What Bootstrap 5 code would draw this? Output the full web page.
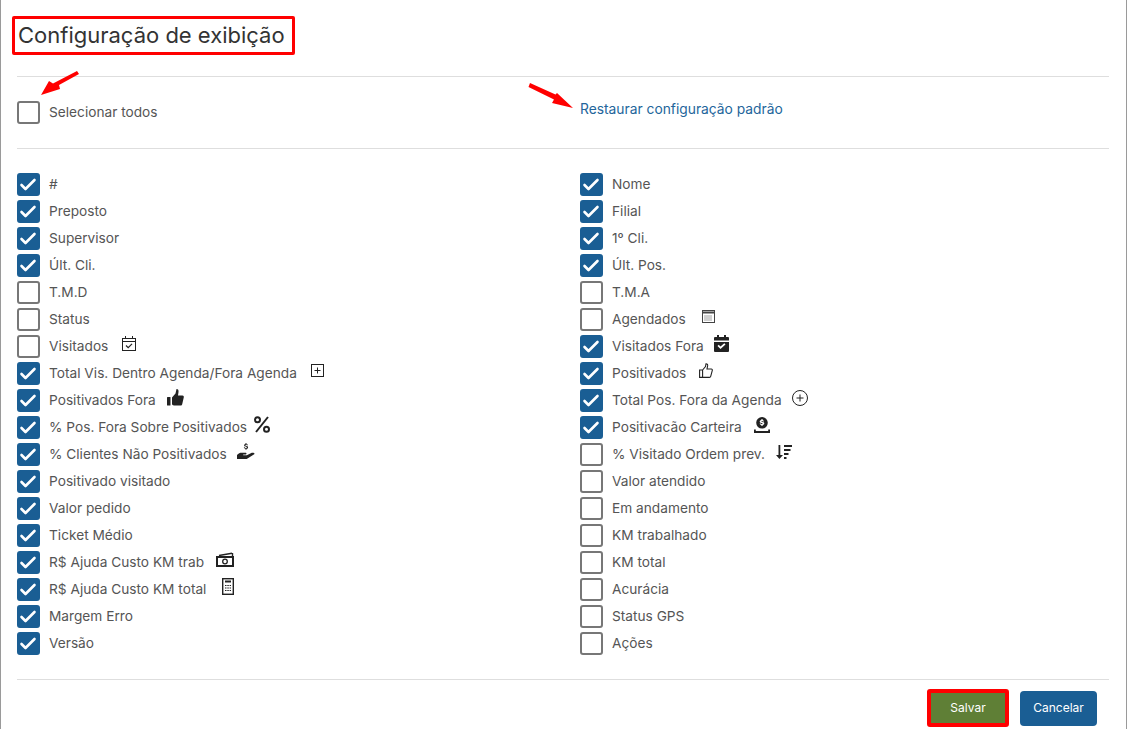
<!DOCTYPE html>
<html lang="pt-BR">
<head>
<meta charset="utf-8">
<title>Configuração de exibição</title>
<link href="https://cdn.jsdelivr.net/npm/bootstrap@5.3.0/dist/css/bootstrap.min.css" rel="stylesheet">
<style>
html,body{height:100%;overflow:hidden;background:#fff}
body{font-family:Inter,"Liberation Sans",sans-serif;font-size:13.7px;color:#555}
.dlg{position:relative;height:729px;padding:0 17px 0 16px;border-left:1px solid #9a9a9a;border-right:1px solid #9a9a9a}
.ttl-wrap{height:76px;padding-top:16px}
.ttl{display:inline-block;margin:0 0 0 -5px;padding:0 7px 0 3px;height:39px;line-height:33px;border:3px solid #f00;border-radius:2px;font-size:22px;font-weight:400;color:#333;white-space:nowrap}
.sep{border-top:1px solid #dedede;opacity:1;margin:0}
.grid{--bs-gutter-x:34px}
.selrow{height:71px;padding-top:22px}
.chk{display:flex;align-items:center;height:27px;gap:9px;margin:0}
.chk .form-check-input{width:23px;height:23px;margin:0;flex:none;border:2px solid #777;border-radius:3px;box-shadow:none}
.chk .form-check-input:checked{background-color:#1a5e94;border-color:#1a5e94;background-size:100%;background-image:url("data:image/svg+xml,%3csvg xmlns='http://www.w3.org/2000/svg' viewBox='0 0 19 19'%3e%3cpath fill='none' stroke='%23fff' stroke-linecap='round' stroke-linejoin='round' stroke-width='2.6' d='M2.500 10l4 4 9-9'/%3e%3c/svg%3e")}
.lnk{display:block;color:#23659b;text-decoration:none;line-height:20px;font-size:13.8px}
.lst{padding-top:22px;height:530px}
.ico{flex:none;margin-left:5px;margin-bottom:6px;color:#222}
.ic-posfora{margin-left:2px}
.ic-pct{margin-left:-2px}
.ic-hand{margin-left:1px}
.ic-trab{margin-left:3px}
.ic-total{margin-left:7px}
.ic-agend{margin-left:7px}
.ic-visfora{margin-left:1px}
.ic-pos{margin-left:4px}
.ic-totpos{margin-left:1px}
.ic-cart{margin-left:3px}
.ic-ordem{margin-left:2px}
.foot{display:flex;justify-content:flex-end;align-items:center;gap:11px;padding:9px 12px 0 0}
.btn-sv,.btn-cn{font-size:12px;color:#fff;border-radius:4px;padding:0}
.btn-sv{width:82px;height:38px;background:#5f7f36;border:4px solid #f00;border-radius:3px}
.btn-cn{width:77px;height:35px;background:#1a5e94;border:0}
.arw{position:absolute;pointer-events:none}
.arw-a{left:39px;top:70px}
.arw-b{left:526px;top:83px}
</style>
</head>
<body>
<div class="dlg">
  <div class="ttl-wrap"><h5 class="ttl">Configuração de exibição</h5></div>
  <hr class="sep">
  <div class="row grid selrow">
    <div class="col-6"><label class="chk"><input class="form-check-input" type="checkbox"><span>Selecionar todos</span></label></div>
    <div class="col-6"><a class="lnk" href="#">Restaurar configuração padrão</a></div>
  </div>
  <hr class="sep">
  <div class="row grid lst">
    <div class="col-6">
      <label class="chk"><input class="form-check-input" type="checkbox" checked><span>#</span></label>
      <label class="chk"><input class="form-check-input" type="checkbox" checked><span>Preposto</span></label>
      <label class="chk"><input class="form-check-input" type="checkbox" checked><span>Supervisor</span></label>
      <label class="chk"><input class="form-check-input" type="checkbox" checked><span>Últ. Cli.</span></label>
      <label class="chk"><input class="form-check-input" type="checkbox"><span>T.M.D</span></label>
      <label class="chk"><input class="form-check-input" type="checkbox"><span>Status</span></label>
      <label class="chk"><input class="form-check-input" type="checkbox"><span>Visitados</span>
        <svg class="ico" width="14" height="15" viewBox="0 0 14 15" fill="none" stroke="currentColor"><rect x=".5" y="2.500" width="13" height="12"/><path d="M.5 5.500h13M3.500 0v3M10.500 0v3"/><path d="M4 9.500l2.200 2.200L10 7.800" stroke-width="1.200"/></svg></label>
      <label class="chk"><input class="form-check-input" type="checkbox" checked><span>Total Vis. Dentro Agenda/Fora Agenda</span>
        <svg class="ico" width="13" height="13" viewBox="0 0 13 13" fill="none" stroke="currentColor"><rect x=".5" y=".5" width="12" height="12"/><path d="M6.500 3.500v6M3.500 6.500h6"/></svg></label>
      <label class="chk"><input class="form-check-input" type="checkbox" checked><span>Positivados Fora</span>
        <svg class="ico ic-posfora" width="17" height="17" viewBox="0 0 17 17" fill="currentColor"><rect x="0" y="8" width="3.500" height="8.500" rx=".5"/><path d="M5 8.500L8.500 4.500 9.500 0c1.600 0 2.300 1.300 2 3L11 6.500h4.500c1 0 1.500 1 1.300 1.800l-1.600 7c-.2.800-.8 1.200-1.500 1.200H7c-1.200 0-2-.8-2-1.700z"/></svg></label>
      <label class="chk"><input class="form-check-input" type="checkbox" checked><span>% Pos. Fora Sobre Positivados</span>
        <svg class="ico ic-pct" width="16" height="17" viewBox="0 0 16 17" fill="none" stroke="currentColor" stroke-width="2"><path d="M14 1L2 16"/><circle cx="3.500" cy="3.700" r="2.500"/><circle cx="12.500" cy="13.300" r="2.500"/></svg></label>
      <label class="chk"><input class="form-check-input" type="checkbox" checked><span>% Clientes Não Positivados</span>
        <svg class="ico ic-hand" width="18" height="17" viewBox="0 0 18 17" fill="currentColor"><path d="M0 12c1.500-1.600 3-2.200 4.500-2.200h4c1.200 0 1.400 1.700.1 1.800H6.200v.6h3.600l5-2.400c1.500-.6 3.600.5 2.400 1.500L10.500 15.500c-.6.400-1.100.5-1.800.5H0z"/><path d="M8.500 0h1v1c1 .1 1.400.6 1.500 1.300h-1c-.1-.4-.3-.5-.9-.5-.5 0-.8.200-.8.500 0 .8 2.800.3 2.800 2.100 0 .8-.6 1.200-1.600 1.300v1h-1V5.700c-1-.1-1.600-.6-1.700-1.500h1c.1.500.4.700 1.200.7.500 0 .9-.2.900-.5 0-.9-2.800-.3-2.800-2.100 0-.7.500-1.200 1.400-1.300z"/></svg></label>
      <label class="chk"><input class="form-check-input" type="checkbox" checked><span>Positivado visitado</span></label>
      <label class="chk"><input class="form-check-input" type="checkbox" checked><span>Valor pedido</span></label>
      <label class="chk"><input class="form-check-input" type="checkbox" checked><span>Ticket Médio</span></label>
      <label class="chk"><input class="form-check-input" type="checkbox" checked><span>R$ Ajuda Custo KM trab</span>
        <svg class="ico ic-trab" width="18" height="15" viewBox="0 0 18 15" fill="none" stroke="currentColor"><rect x="1" y="5" width="16" height="9" stroke-width="2"/><circle cx="9" cy="9.500" r="2.300" stroke-width="1.300"/><path d="M3 3.500L16 1.200" stroke-width="1.600"/><path d="M16.500 1v4" stroke-width="1.400"/></svg></label>
      <label class="chk"><input class="form-check-input" type="checkbox" checked><span>R$ Ajuda Custo KM total</span>
        <svg class="ico ic-total" width="12" height="17" viewBox="0 0 12 17" fill="none" stroke="currentColor"><rect x=".7" y=".7" width="10.600" height="15.600" stroke-width="1.400"/><path d="M3 3.500h6" stroke-width="2"/><path d="M3 7.500h1.500M5.300 7.500h1.500M7.600 7.500H9M3 10h1.500M5.300 10h1.500M7.600 10H9M3 12.500h1.500M5.300 12.500h1.500M7.600 12.500H9" stroke-width="1.200"/></svg></label>
      <label class="chk"><input class="form-check-input" type="checkbox" checked><span>Margem Erro</span></label>
      <label class="chk"><input class="form-check-input" type="checkbox" checked><span>Versão</span></label>
    </div>
    <div class="col-6">
      <label class="chk"><input class="form-check-input" type="checkbox" checked><span>Nome</span></label>
      <label class="chk"><input class="form-check-input" type="checkbox" checked><span>Filial</span></label>
      <label class="chk"><input class="form-check-input" type="checkbox" checked><span>1º Cli.</span></label>
      <label class="chk"><input class="form-check-input" type="checkbox" checked><span>Últ. Pos.</span></label>
      <label class="chk"><input class="form-check-input" type="checkbox"><span>T.M.A</span></label>
      <label class="chk"><input class="form-check-input" type="checkbox"><span>Agendados</span>
        <svg class="ico ic-agend" width="13" height="13" viewBox="0 0 13 13" fill="none" stroke="#444"><rect x=".5" y=".5" width="12" height="12"/><path d="M.5 2.500h12" stroke-width="2"/><path d="M2.500 6h8M2.500 8h8M2.500 10h8" stroke-dasharray="1 1"/></svg></label>
      <label class="chk"><input class="form-check-input" type="checkbox" checked><span>Visitados Fora</span>
        <svg class="ico ic-visfora" width="15" height="17" viewBox="0 0 15 17" fill="currentColor"><path fill-rule="evenodd" d="M3 0h2v2h5V0h2v2h2a1 1 0 011 1v13a1 1 0 01-1 1H1a1 1 0 01-1-1V3a1 1 0 011-1h2zM0 5.500V7h15V5.500zM3.500 11l3 3 5-4.500-1.200-1.200-3.800 3.300-1.800-1.800z"/></svg></label>
      <label class="chk"><input class="form-check-input" type="checkbox" checked><span>Positivados</span>
        <svg class="ico ic-pos" width="14" height="15" viewBox="0 0 14 15" fill="none" stroke="currentColor" stroke-width="1.100"><path d="M.6 7h3v7.400h-3zM3.600 7L6.500 3.500 7 .7c1.300 0 1.800 1 1.600 2.200L8 6h4.300c.8 0 1.200.7 1 1.400l-1.600 6c-.2.700-.6 1-1.200 1H3.600"/></svg></label>
      <label class="chk"><input class="form-check-input" type="checkbox" checked><span>Total Pos. Fora da Agenda</span>
        <svg class="ico ic-totpos" width="16" height="16" viewBox="0 0 16 16" fill="none" stroke="currentColor"><circle cx="8" cy="8" r="7.500"/><path d="M8 4.500v7M4.500 8h7"/></svg></label>
      <label class="chk"><input class="form-check-input" type="checkbox" checked><span>Positivacão Carteira</span>
        <svg class="ico ic-cart" width="16" height="16" viewBox="0 0 16 16" fill="currentColor"><path fill-rule="evenodd" d="M8 0a5.800 5.800 0 110 11.600A5.800 5.800 0 018 0zM7.400 2v1c-1 .1-1.700.7-1.700 1.500 0 1.900 3 1.200 3 2.100 0 .3-.3.500-.8.500s-.9-.2-1-.7H5.600c.1.900.8 1.400 1.800 1.500v1h1.200V8c1-.1 1.700-.7 1.700-1.500 0-1.900-3-1.300-3-2.100 0-.3.300-.5.700-.5.500 0 .8.200.9.600h1.100C9.900 3.700 9.400 3.100 8.600 3V2z"/><path d="M0 12.500h1.800V14h12.400v-1.500H16V16H0z"/></svg></label>
      <label class="chk"><input class="form-check-input" type="checkbox"><span>% Visitado Ordem prev.</span>
        <svg class="ico ic-ordem" width="16" height="14" viewBox="0 0 16 14" fill="currentColor"><path d="M2.500 0h1.800v10H7l-3.600 4L0 10h2.500zM8 0h8v2H8zM8 4h6.500v2H8zM8 8h4.500v2H8zM8 12h2.500v2H8z"/></svg></label>
      <label class="chk"><input class="form-check-input" type="checkbox"><span>Valor atendido</span></label>
      <label class="chk"><input class="form-check-input" type="checkbox"><span>Em andamento</span></label>
      <label class="chk"><input class="form-check-input" type="checkbox"><span>KM trabalhado</span></label>
      <label class="chk"><input class="form-check-input" type="checkbox"><span>KM total</span></label>
      <label class="chk"><input class="form-check-input" type="checkbox"><span>Acurácia</span></label>
      <label class="chk"><input class="form-check-input" type="checkbox"><span>Status GPS</span></label>
      <label class="chk"><input class="form-check-input" type="checkbox"><span>Ações</span></label>
    </div>
  </div>
  <hr class="sep">
  <div class="foot">
    <button class="btn btn-sv" type="button">Salvar</button>
    <button class="btn btn-cn" type="button">Cancelar</button>
  </div>
  <svg class="arw arw-a" width="40" height="27" viewBox="0 0 40 27" fill="#f00"><path d="M37 1l2 3L19 15l1 4L1 25 9 11l4 2.500z"/></svg>
  <svg class="arw arw-b" width="50" height="27" viewBox="0 0 50 27" fill="#f00"><path d="M3 0L28.500 11.500 30 10 46 25 25 20l2-3.500L1.500 4z"/></svg>
</div>
<script src="https://cdn.jsdelivr.net/npm/bootstrap@5.3.0/dist/js/bootstrap.bundle.min.js"></script>
</body>
</html>
